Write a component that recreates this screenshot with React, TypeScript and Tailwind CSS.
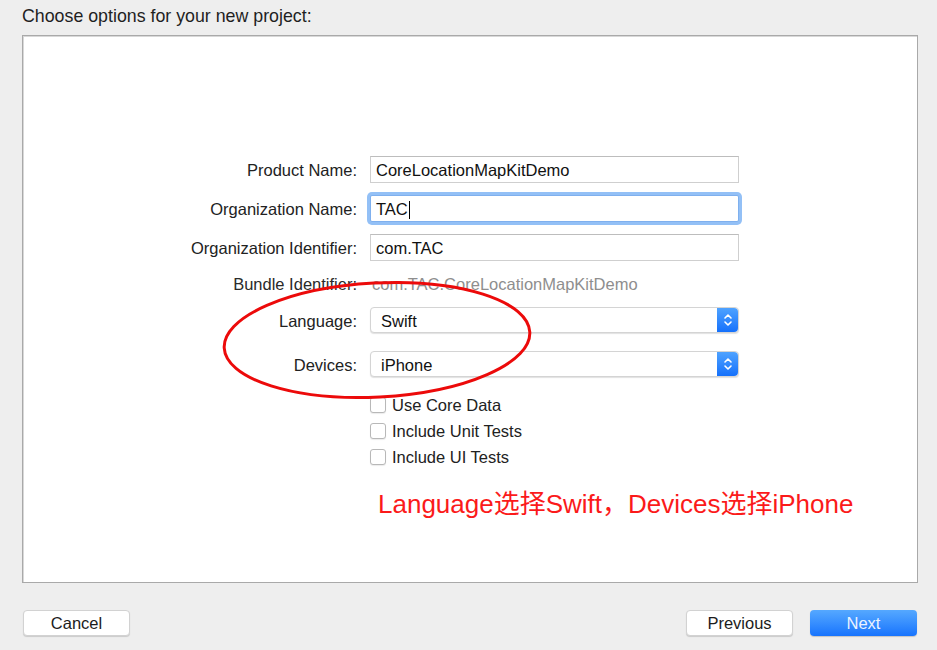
import type { ReactNode } from 'react';

const FONT = '"Liberation Sans", "Noto Sans CJK SC", sans-serif';

function Label({ children, muted }: { children: ReactNode; muted?: boolean }) {
  return (
    <div className={`w-[335px] pr-[1px] text-right text-[16.5px] ${muted ? 'text-[#2a2a2a]' : 'text-[#222]'}`}>
      {children}
    </div>
  );
}

function TextField({ value, focused }: { value: string; focused?: boolean }) {
  return (
    <div
      className={`ml-[12px] flex h-[27px] w-[369px] items-center bg-white pl-[5px] pt-[2px] text-[16.5px] text-[#111] ${
        focused
          ? 'border border-[#7fb0ee] shadow-[0_0_0_3px_#93c0f6] rounded-[2px]'
          : 'border border-[#cfcfcf] border-t-[#bdbdbd]'
      }`}
    >
      {value}
      {focused && <span className="ml-[1px] inline-block h-[18px] w-[1px] bg-black" />}
    </div>
  );
}

function Stepper() {
  return (
    <div className="flex h-full w-[21px] items-center justify-center rounded-r-[4px] bg-gradient-to-b from-[#4ea2ff] to-[#1470fb]">
      <svg width="10" height="16" viewBox="0 0 10 16" fill="none" stroke="white" strokeWidth="1.6" strokeLinecap="round" strokeLinejoin="round">
        <path d="M2 6 L5 3 L8 6" />
        <path d="M2 10 L5 13 L8 10" />
      </svg>
    </div>
  );
}

function Popup({ value }: { value: string }) {
  return (
    <div className="ml-[12px] flex h-[26px] w-[369px] items-center justify-between rounded-[4px] border border-[#d4d4d4] bg-white shadow-[0_1px_1px_rgba(0,0,0,0.12)]">
      <span className="pl-[10px] pt-[2px] text-[16.5px] text-[#111]">{value}</span>
      <Stepper />
    </div>
  );
}

function Check({ label }: { label: string }) {
  return (
    <div className="flex h-[26px] items-center pl-[347px]">
      <div className="h-[16px] w-[16px] rounded-[3px] border border-[#b8b8b8] bg-white shadow-[0_1px_1px_rgba(0,0,0,0.08)]" />
      <span className="ml-[6px] text-[16.5px] text-[#222]">{label}</span>
    </div>
  );
}

function Button({ children, primary, className = '' }: { children: ReactNode; primary?: boolean; className?: string }) {
  return (
    <button
      className={`flex h-[26px] w-[107px] items-center justify-center rounded-[4px] text-[16.5px] ${
        primary
          ? 'bg-gradient-to-b from-[#55a8ff] to-[#1673fd] text-[#eaf3ff] shadow-[0_1px_1px_rgba(0,0,0,0.18)]'
          : 'border border-[#d2d2d2] bg-white text-[#1c1c1c] shadow-[0_1px_1px_rgba(0,0,0,0.15)]'
      } ${className}`}
    >
      {children}
    </button>
  );
}

export default function App() {
  return (
    <div className="flex h-[650px] w-[937px] flex-col bg-[#eeeeee]" style={{ fontFamily: FONT }}>
      {/* title */}
      <div className="flex h-[35px] items-start pl-[22px] pt-[3px] text-[17.8px] text-[#1f1f1f]">
        Choose options for your new project:
      </div>

      {/* options panel */}
      <div className="relative ml-[22px] h-[548px] w-[896px] border border-[#a9a9a9] bg-white shadow-[inset_1px_1px_0_#d8d8d8]">
        <div className="flex flex-col pt-[120px]">
          <div className="flex h-[27px] items-center">
            <div className="pt-[2px]"><Label>Product Name:</Label></div>
            <TextField value="CoreLocationMapKitDemo" />
          </div>
          <div className="mt-[12px] flex h-[27px] items-center">
            <div className="pt-[2px]"><Label>Organization Name:</Label></div>
            <TextField value="TAC" focused />
          </div>
          <div className="mt-[12px] flex h-[27px] items-center">
            <div className="pt-[2px]"><Label>Organization Identifier:</Label></div>
            <TextField value="com.TAC" />
          </div>
          <div className="mt-[11px] flex h-[24px] items-center">
            <Label muted>Bundle Identifier:</Label>
            <span className="ml-[14px] text-[16.5px] text-[#8e8e8e]">com.TAC.CoreLocationMapKitDemo</span>
          </div>
          <div className="mt-[11px] flex h-[26px] items-center">
            <div className="pt-[2px]"><Label>Language:</Label></div>
            <Popup value="Swift" />
          </div>
          <div className="mt-[18px] flex h-[26px] items-center">
            <div className="pt-[2px]"><Label>Devices:</Label></div>
            <Popup value="iPhone" />
          </div>
          <div className="mt-[15px] flex flex-col">
            <Check label="Use Core Data" />
            <Check label="Include Unit Tests" />
            <Check label="Include UI Tests" />
          </div>
          <div className="mt-[18px] pl-[355px] text-[26px] leading-[32px] text-[#fb1a1a]">
            Language选择Swift，Devices选择iPhone
          </div>
        </div>

        {/* hand-drawn annotation */}
        <svg className="pointer-events-none absolute left-[195px] top-[240px]" width="320" height="130" viewBox="0 0 320 130" fill="none">
          <ellipse cx="159" cy="64" rx="153" ry="57" stroke="#ec0a0a" strokeWidth="3" transform="rotate(-3 159 64)" />
        </svg>
      </div>

      {/* bottom buttons */}
      <div className="mt-[27px] flex items-center pl-[23px] pr-[20px]">
        <Button>Cancel</Button>
        <div className="flex-1" />
        <Button>Previous</Button>
        <Button primary className="ml-[17px]">Next</Button>
      </div>
    </div>
  );
}
